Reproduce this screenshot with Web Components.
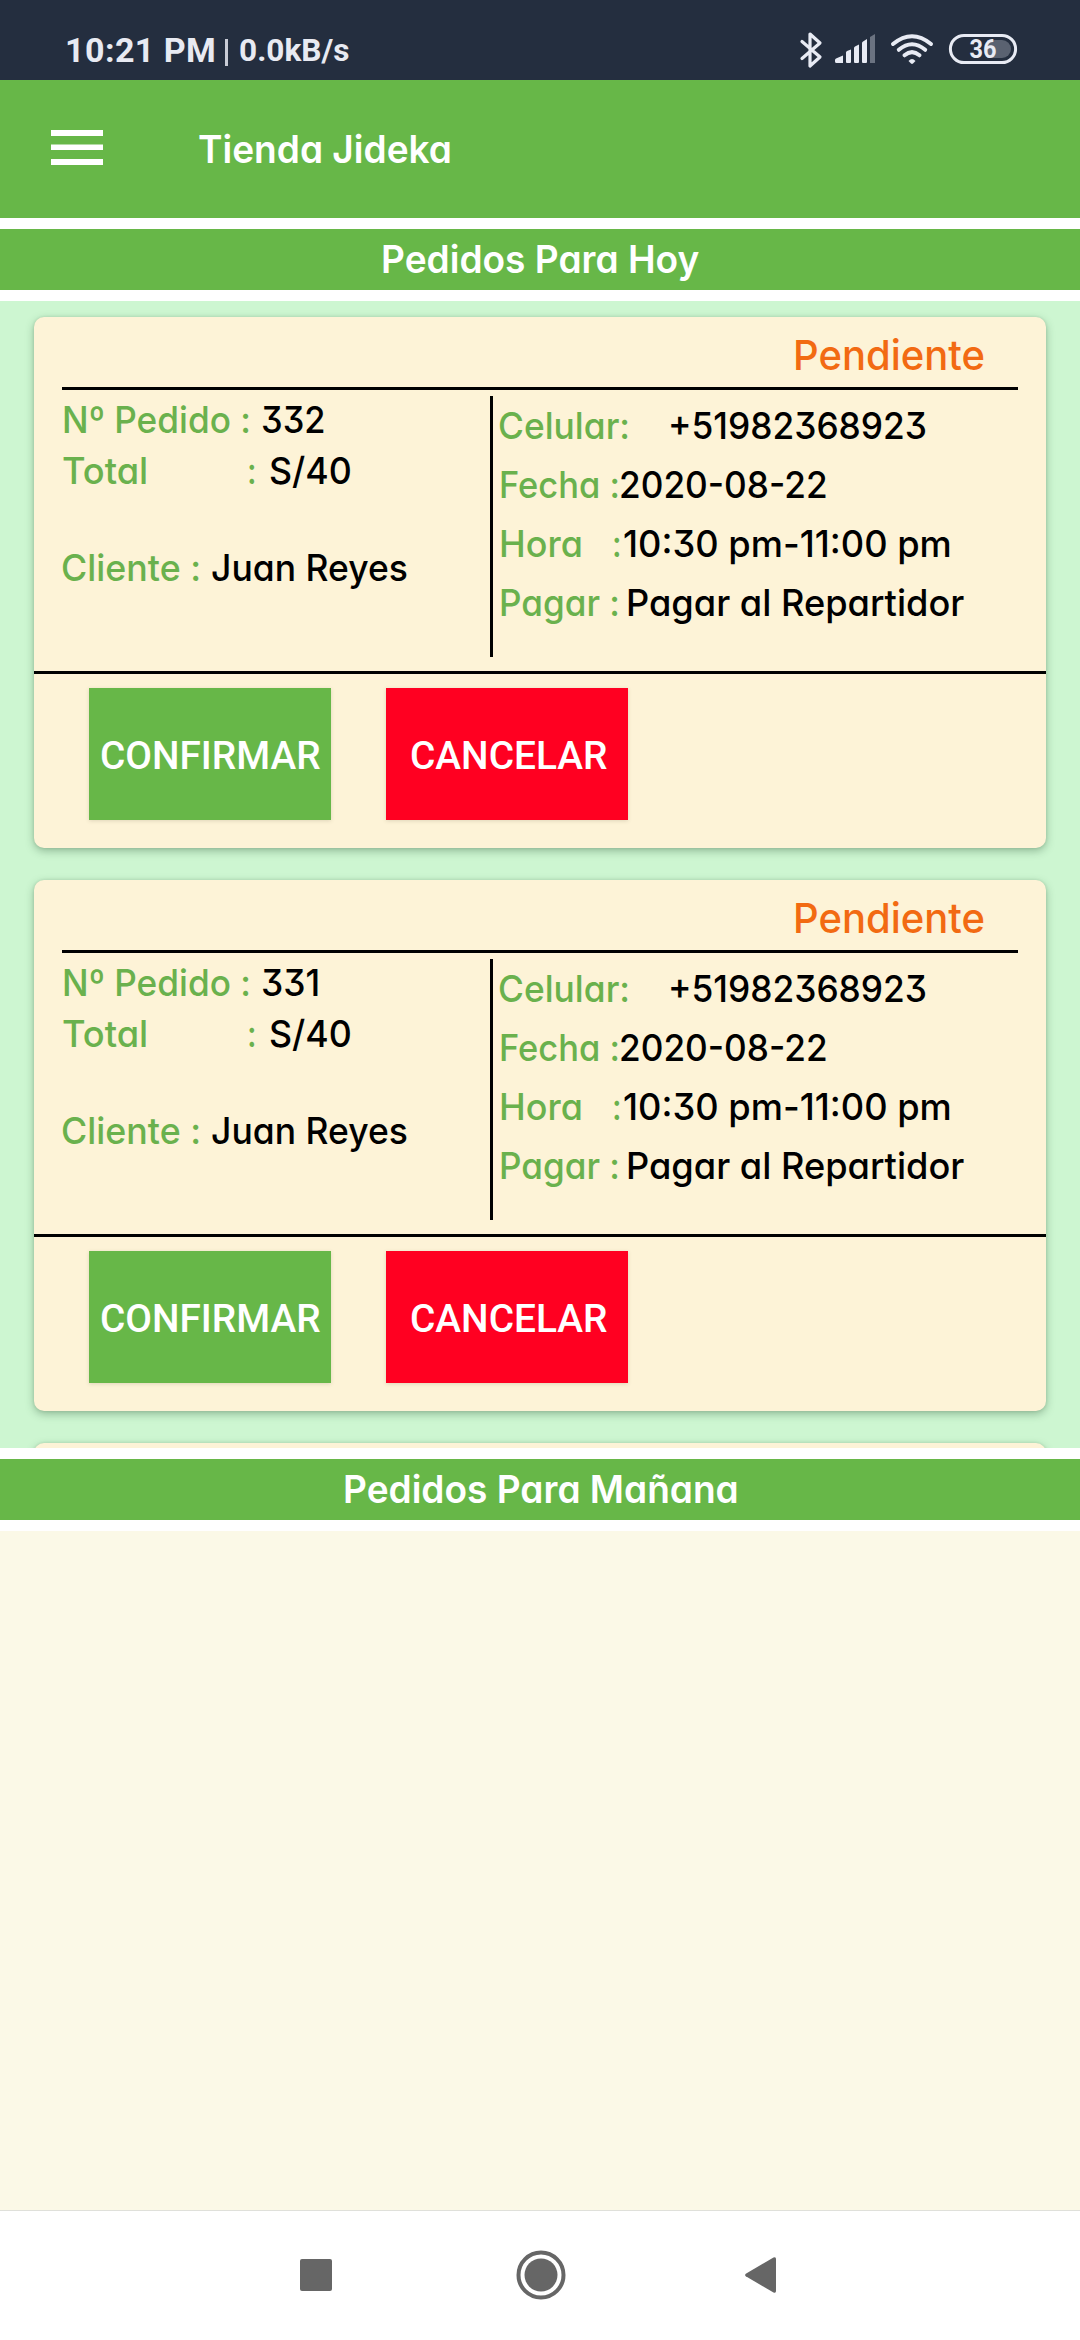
<!DOCTYPE html>
<html lang="es">
<head>
<meta charset="utf-8">
<title>Tienda Jideka</title>
<style>
html,body{margin:0;padding:0;background:#fff}
body{width:1080px;height:2340px;overflow:hidden}
</style>
</head>
<body>
<store-app></store-app>
<script>
const define = (name, html, setup) => customElements.define(name, class extends HTMLElement {
  connectedCallback() {
    if (this.shadowRoot) return;
    this.attachShadow({mode: 'open'}).innerHTML = html;
    if (setup) setup.call(this, this.shadowRoot);
  }
});

// A text run whose ink fills the width given by its "w" attribute.
const canvas = document.createElement('canvas').getContext('2d');
define('fit-text', `<style>
:host{display:block;flex:none;white-space:pre}
span{display:inline-block;transform-origin:0 50%;white-space:pre}
</style><span><slot></slot></span>`, function (root) {
  const want = +this.getAttribute('w');
  const cs = getComputedStyle(this);
  const span = root.querySelector('span');
  const text = this.textContent;
  this.style.width = want + 'px';
  canvas.font = `${cs.fontWeight} ${cs.fontSize} ${cs.fontFamily}`;
  const m = canvas.measureText(text);
  const left = -m.actualBoundingBoxLeft;
  const rightBearing = m.width - m.actualBoundingBoxRight;
  const ink = span.getBoundingClientRect().width - left - rightBearing;
  if (ink > want) {
    const s = want / ink;
    span.style.transform = `scaleX(${s})`;
    span.style.marginLeft = (-left * s) + 'px';
  } else {
    span.style.marginLeft = -left + 'px';
    if (text.length > 1) span.style.letterSpacing = ((want - ink) / (text.length - 1)) + 'px';
  }
});

define('status-bar', `<style>
:host{display:flex;box-sizing:border-box;height:80px;padding-left:67px;background:#242e3f;color:#e8eaf2;font:700 34px/50px Roboto,sans-serif}
fit-text{height:50px;padding-top:25px}
.bar{width:3px;height:27px;margin:39px 12px 0 11px;background:#c9ccd6}
.rate{font-size:32px}
svg{display:block;margin-left:444px;flex:none}
text{font:700 25px Roboto,sans-serif}
</style>
<fit-text w="147">10:21 PM</fit-text><i class="bar"></i><fit-text class="rate" w="109">0.0kB/s</fit-text>
<svg width="230" height="80" viewBox="792 0 230 80" fill="#e8ebf4">
<path d="M801 41.500 819 57 809 66V34L819 43 801 58.500" fill="none" stroke="#e8ebf4" stroke-width="3.200" stroke-linejoin="round" stroke-linecap="round"/>
<path d="M834 60Q834 59 835 58.500L842 55.500V63H835.500Q834 63 834 61.500ZM845 52.500Q845 51.500 846 51L850 49.500V62Q850 63 849 63H846Q845 63 845 62ZM853 48Q853 47 854 46.500L858 44.500V62Q858 63 857 63H854Q853 63 853 62ZM861 43Q861 42 862 41.500L866 39V62Q866 63 865 63H862Q861 63 861 62Z"/>
<path d="M869 37 874 34V63H869Z" fill="#6b7381"/>
<g fill="none" stroke="#e8ebf4" stroke-width="4" stroke-linecap="round"><path d="M892 44Q911 28.500 930 44M897.800 49.800Q911 38.800 924.200 49.800M903.500 55.300Q911 49 918.500 55.300"/></g>
<path d="M907.500 61Q911 57 914.500 61L912 63.500Q911 64.300 910 63.500Z"/>
<path d="M986 40H1001A9 9 0 0 1 1001 58H986Z" fill="#5a6271"/>
<rect x="949.400" y="35.400" width="65.200" height="27.200" rx="13.600" fill="none" stroke="#e8ebf4" stroke-width="3"/>
<text x="968.500" y="58" textLength="27" lengthAdjust="spacingAndGlyphs">36</text>
</svg>`);

define('app-bar', `<style>
:host{display:flex;height:138px;background:#67b748;color:#fff}
svg{display:block;margin:50px 96px 0 51px}
fit-text{margin-top:44px;font-size:38.500px;font-weight:600}
</style>
<svg width="52" height="35" viewBox="0 0 52 35" fill="#fff"><path d="M0 0H52V6H0ZM0 14.500H52V20H0ZM0 29H52V35H0Z"/></svg>
<fit-text w="251">Tienda Jideka</fit-text>`);

define('section-title', `<style>
:host{display:block;background:#fff;padding:11px 0}
div{display:flex;height:61px;padding-left:var(--start);background:#67b748;color:#fff;font-size:38px;font-weight:600;line-height:60px}
</style><div><slot></slot></div>`);

define('action-button', `<style>
:host{display:flex;width:242px;height:132px;box-sizing:border-box;color:#fff;font:500 39px/60px Roboto,sans-serif;justify-content:center;padding-top:38px;box-shadow:0 1px 4px rgba(70,60,40,.16)}
</style><slot></slot>`);

define('data-row', `<style>
:host{display:flex;height:46px;font-size:37px;line-height:46px}
</style><slot></slot>`);

define('order-card', `<style>
:host{display:block;flex:none;box-sizing:border-box;height:531px;border-radius:10px;background:#fdf3d7;box-shadow:0 3px 8px rgba(40,80,50,.36),0 0 3px rgba(40,80,50,.14);color:#000}
header{display:flex;justify-content:flex-end;height:70px;padding-right:34px;margin:0 28px;border-bottom:3px solid #000;color:#f26a12;font-size:41px;line-height:50px}
header fit-text{margin-top:13px}
main{display:flex;height:281px}
.left{width:428px;padding-left:28px;padding-top:7px}
.right{padding:13px 0 0 7px;display:flex;flex-direction:column;gap:13px}
.rule{width:3px;height:261px;margin-top:6px;background:#000}
.left data-row{padding-bottom:5px}
.k{color:#6ab14d}
footer{display:flex;gap:55px;border-top:3px solid #000;padding:14px 55px 0}
</style>
<header><fit-text w="188">Pendiente</fit-text></header>
<main>
<div class="left">
<data-row style="padding-left:2px"><fit-text class="k" w="185">Nº Pedido :</fit-text><fit-text id="num" w="61" style="margin-left:14px"></fit-text></data-row>
<data-row style="padding-left:1px"><fit-text class="k" w="83">Total</fit-text><fit-text class="k" w="6" style="margin-left:103px">:</fit-text><fit-text w="80" style="margin-left:15px">S/40</fit-text></data-row>
<data-row style="padding:46px 0 0 1px"><fit-text class="k" w="136">Cliente :</fit-text><fit-text w="195" style="margin-left:13px">Juan Reyes</fit-text></data-row>
</div>
<div class="rule"></div>
<div class="right">
<data-row><fit-text class="k" w="128">Celular:</fit-text><fit-text w="255" style="margin-left:43px">+51982368923</fit-text></data-row>
<data-row style="padding-left:1px"><fit-text class="k" w="117">Fecha :</fit-text><fit-text w="205" style="margin-left:3px">2020-08-22</fit-text></data-row>
<data-row style="padding-left:1px"><fit-text class="k" w="80">Hora</fit-text><fit-text class="k" w="6" style="margin-left:33px">:</fit-text><fit-text w="326" style="margin-left:4px">10:30 pm-11:00 pm</fit-text></data-row>
<data-row style="padding-left:1px"><fit-text class="k" w="117">Pagar :</fit-text><fit-text w="336" style="margin-left:10px">Pagar al Repartidor</fit-text></data-row>
</div>
</main>
<footer>
<action-button style="background:#67b748"><fit-text w="219">CONFIRMAR</fit-text></action-button>
<action-button style="background:#ff0021;padding-left:3px"><fit-text w="196">CANCELAR</fit-text></action-button>
</footer>`, function (root) {
  const number = this.getAttribute('number');
  const next = document.createElement('fit-text');
  next.setAttribute('w', number === '331' ? '55' : '61');
  next.style.marginLeft = '14px';
  next.textContent = number;
  root.getElementById('num').replaceWith(next);
});

define('card-shell', `<style>
:host{display:block;flex:none;height:531px;border-radius:10px;background:#fdf3d7;box-shadow:0 3px 8px rgba(40,80,50,.36),0 0 3px rgba(40,80,50,.14)}
</style>`);

define('order-list', `<style>
:host{display:flex;flex-direction:column;gap:32px;box-sizing:border-box;height:1147px;overflow:hidden;padding:16px 34px 0;background:#cdf6d1}
</style><slot></slot>`);

define('nav-bar', `<style>
:host{display:flex;box-sizing:border-box;height:130px;border-top:1px solid #dfe0da;background:#fff;padding:0 303px 1px 300px;justify-content:space-between;align-items:center}
svg{display:block}
</style>
<svg width="32" height="32"><rect width="32" height="32" rx="2" fill="#666"/></svg>
<svg width="50" height="50" viewBox="0 0 50 50" style="margin-left:5px"><circle cx="25" cy="25" r="22.500" fill="none" stroke="#666" stroke-width="4"/><circle cx="25" cy="25" r="16.500" fill="#666"/></svg>
<svg width="32" height="36" viewBox="0 0 32 36"><path d="M.8 16.700 28.500.5Q31 -.5 31 2V34Q31 36.500 28.500 35.500L.8 19.300Q-.6 18 .8 16.700Z" fill="#666"/></svg>`);

define('store-app', `<style>
:host{display:flex;flex-direction:column;width:1080px;height:2340px;font:500 37px/50px Inter,sans-serif;font-feature-settings:"cv11","cv09"}
.empty{height:679px;background:#fbf9e7}
</style>
<status-bar></status-bar>
<app-bar></app-bar>
<section-title style="--start:383px"><fit-text w="316">Pedidos Para Hoy</fit-text></section-title>
<order-list><order-card number="332"></order-card><order-card number="331"></order-card><card-shell></card-shell></order-list>
<section-title style="--start:345px"><fit-text w="392">Pedidos Para Mañana</fit-text></section-title>
<div class="empty"></div>
<nav-bar></nav-bar>`);
</script>
</body>
</html>
